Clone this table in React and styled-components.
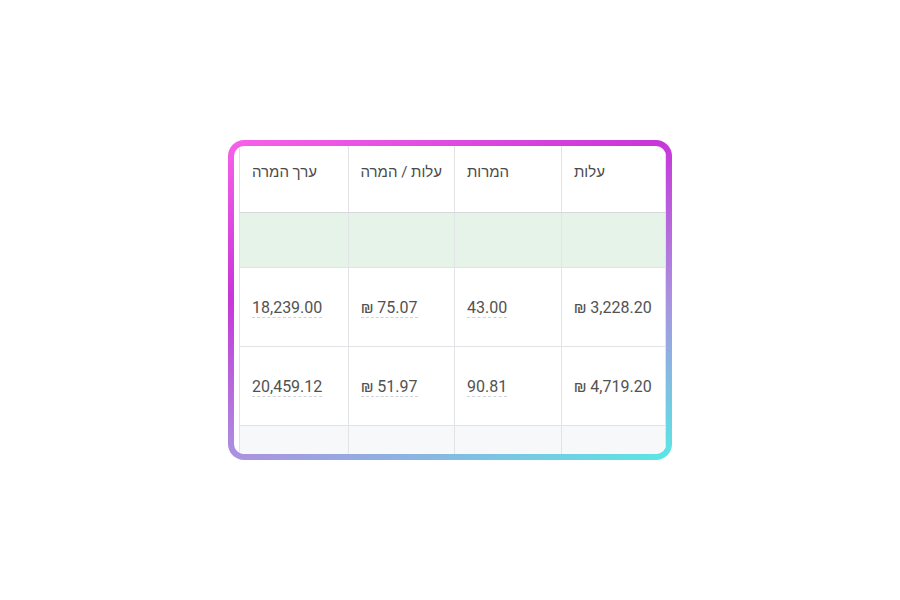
import React from "react";
import styled, { createGlobalStyle } from "styled-components";

const Global = createGlobalStyle`
  html, body { margin: 0; padding: 0; background: #ffffff; }
  body { font-family: Roboto, "Liberation Sans", "DejaVu Sans", sans-serif; }
`;

const Page = styled.div`
  width: 900px;
  height: 600px;
  display: flex;
  align-items: center;
  justify-content: center;
`;

const Frame = styled.div`
  width: 444px;
  height: 320px;
  box-sizing: border-box;
  padding: 6px;
  border-radius: 16px;
  background: linear-gradient(160deg, #f862e8 0%, #c736d9 33%, #a994e0 67%, #58e8e4 100%);
`;

const Viewport = styled.div`
  width: 100%;
  height: 100%;
  background: #ffffff;
  border-radius: 10px;
  overflow: hidden;
  direction: rtl;
  display: flex;
  justify-content: flex-start;
`;

const Table = styled.table`
  border-collapse: collapse;
  table-layout: fixed;
  width: 426px;
  flex: none;
  font-size: 16px;
  color: #525252;
`;

const Th = styled.th`
  width: ${(p) => p.$w}px;
  height: 66px;
  box-sizing: border-box;
  padding: 17px 12px 0;
  text-align: left;
  vertical-align: top;
  white-space: nowrap;
  font-weight: 400;
  font-size: 15px;
  color: #4a4a4a;
  border-left: 1px solid #e1e3e6;
  border-bottom: 1px solid #d6d9dc;
  border-right: 1px solid #e1e3e6;
`;

const Row = styled.tr`
  background: ${(p) => p.$bg || "#ffffff"};
`;

const Td = styled.td`
  height: ${(p) => p.$h}px;
  box-sizing: border-box;
  padding: 2px 12px 0;
  text-align: left;
  vertical-align: middle;
  white-space: nowrap;
  border: 1px solid #e1e3e6;
  border-top-color: ${(p) => (p.$top ? "#d6d9dc" : "#e1e3e6")};
`;

const Value = styled.span`
  direction: ltr;
  display: inline-block;
  line-height: 18px;
  border-bottom: 1px dashed ${(p) => (p.$plain ? "transparent" : "#cfd2d6")};
`;

const rows = [
  ["₪ 3,228.20", "43.00", "₪ 75.07", "18,239.00"],
  ["₪ 4,719.20", "90.81", "₪ 51.97", "20,459.12"],
];

export default function App() {
  return (
    <>
      <Global />
      <Page>
        <Frame>
          <Viewport>
            <Table>
              <thead>
                <tr>
                  <Th $w={104}>עלות</Th>
                  <Th $w={107}>המרות</Th>
                  <Th $w={106}>עלות / המרה</Th>
                  <Th $w={109}>ערך המרה</Th>
                </tr>
              </thead>
              <tbody>
                <Row $bg="#e6f3e8">
                  {[0, 1, 2, 3].map((i) => (
                    <Td key={i} $h={55} $top />
                  ))}
                </Row>
                {rows.map((r, ri) => (
                  <Row key={ri}>
                    {r.map((v, ci) => (
                      <Td key={ci} $h={79}>
                        <Value $plain={ci === 0}>{v}</Value>
                      </Td>
                    ))}
                  </Row>
                ))}
                <Row $bg="#f7f8fa">
                  {[0, 1, 2, 3].map((i) => (
                    <Td key={i} $h={44} />
                  ))}
                </Row>
              </tbody>
            </Table>
          </Viewport>
        </Frame>
      </Page>
    </>
  );
}
